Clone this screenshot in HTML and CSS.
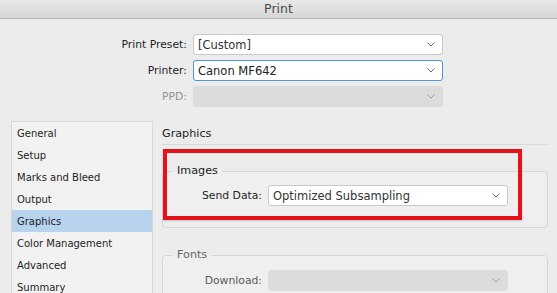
FILE: index.html
```html
<!DOCTYPE html>
<html lang="en">
<head>
    <meta charset="UTF-8">
    <title>Print</title>
    <link rel="stylesheet" href="styles.css">
</head>
<body>
    <div class="window">
        <div class="titlebar">Print</div>

        <div class="top-form">
            <label class="label">Print Preset:</label>
            <div class="select">
                <span>[Custom]</span>
                <svg class="chevron" viewBox="0 0 8 5"><polyline points="0.5,0.5 4,4 7.5,0.5"/></svg>
            </div>

            <label class="label">Printer:</label>
            <div class="select focused">
                <span>Canon MF642</span>
                <svg class="chevron" viewBox="0 0 8 5"><polyline points="0.5,0.5 4,4 7.5,0.5"/></svg>
            </div>

            <label class="label disabled">PPD:</label>
            <div class="select is-disabled">
                <span></span>
                <svg class="chevron" viewBox="0 0 8 5"><polyline points="0.5,0.5 4,4 7.5,0.5"/></svg>
            </div>
        </div>

        <div class="main">
            <ul class="sidebar">
                <li>General</li>
                <li>Setup</li>
                <li>Marks and Bleed</li>
                <li>Output</li>
                <li class="active">Graphics</li>
                <li>Color Management</li>
                <li>Advanced</li>
                <li>Summary</li>
            </ul>

            <div class="content">
                <h2 class="section-title">Graphics</h2>

                <fieldset class="group images">
                    <legend>Images</legend>
                    <div class="row">
                        <label class="label">Send Data:</label>
                        <div class="select">
                            <span>Optimized Subsampling</span>
                            <svg class="chevron" viewBox="0 0 8 5"><polyline points="0.5,0.5 4,4 7.5,0.5"/></svg>
                        </div>
                    </div>
                </fieldset>

                <fieldset class="group fonts">
                    <legend class="muted">Fonts</legend>
                    <div class="row">
                        <label class="label muted">Download:</label>
                        <div class="select is-disabled">
                            <span></span>
                            <svg class="chevron" viewBox="0 0 8 5"><polyline points="0.5,0.5 4,4 7.5,0.5"/></svg>
                        </div>
                    </div>
                    <div class="row">
                        <span></span>
                        <span class="checkbox"></span>
                    </div>
                </fieldset>

                <!-- highlight drawn over the Images group -->
                <div class="highlight"></div>
            </div>
        </div>
    </div>
</body>
</html>
```

FILE: styles.css
```css
* {
    margin: 0;
    padding: 0;
    box-sizing: border-box;
}

body {
    width: 557px;
    height: 293px;
    overflow: hidden;
    background: #ececec;
    font-family: "DejaVu Sans", sans-serif;
    color: #262626;
}

.window {
    height: 293px;
    overflow: hidden;
}

/* Title bar */
.titlebar {
    height: 19px;
    line-height: 18px;
    text-align: center;
    font-size: 12.5px;
    color: #4a4a4a;
    background: linear-gradient(#e8e8e8, #d6d6d6);
    border-bottom: 1px solid #b3b3b3;
}

/* Preset / printer form */
.top-form {
    display: grid;
    grid-template-columns: 187px 250px;
    grid-auto-rows: 21px;
    column-gap: 6px;
    row-gap: 5px;
    padding-top: 15px;
}

.label {
    font-size: 10.8px;
    line-height: 21px;
    text-align: right;
    color: #1f1f1f;
    white-space: nowrap;
}

.label.disabled {
    color: #959595;
}

.label.muted {
    color: #5c5c5c;
}

.select {
    display: flex;
    align-items: center;
    justify-content: space-between;
    height: 21px;
    padding: 0 7px 0 4px;
    background: #fff;
    border: 1px solid #c9c9c9;
    border-radius: 3px;
    font-size: 11.5px;
    color: #333;
}

.select.focused {
    border-color: #4f93d8;
    color: #222;
}

.select.is-disabled {
    background: #dcdcdc;
    border-color: #dcdcdc;
}

.chevron {
    width: 8px;
    height: 5px;
    fill: none;
    stroke: #6b6b6b;
    stroke-width: 1;
}

.is-disabled .chevron {
    stroke: #9d9d9d;
}

/* Main area */
.main {
    display: flex;
    gap: 9px;
    margin-top: 14px;
    padding-left: 11px;
}

.sidebar {
    list-style: none;
    width: 142px;
    height: 200px;
    background: #f2f2f2;
    border: 1px solid #d7d7d7;
    flex-shrink: 0;
}

.sidebar li {
    height: 22px;
    line-height: 23px;
    padding-left: 5px;
    font-size: 10px;
    color: #1e1e1e;
}

.sidebar li.active {
    background: #b8d3ee;
}

.content {
    position: relative;
    width: 386px;
}

.section-title {
    font-size: 11.2px;
    font-weight: normal;
    line-height: 16px;
    padding-top: 5px;
    padding-bottom: 2px;
    border-bottom: 1px solid #dadada;
    color: #222;
}

/* Group boxes */
.group {
    border: 1px solid #d6d6d6;
    border-radius: 4px;
    background: #efefef;
}

.group legend {
    font-size: 11.2px;
    line-height: 14px;
    margin-left: 10px;
    padding: 0 4px;
    color: #222;
}

.group legend.muted {
    color: #666;
}

.images {
    margin-top: 19px;
    padding: 7px 0 13px;
}

.fonts {
    margin-top: 20px;
    padding: 8px 0 10px;
}

.row {
    display: grid;
    grid-template-columns: 99px 240px;
    column-gap: 6px;
    margin-bottom: 8px;
}

.checkbox {
    display: block;
    width: 12px;
    height: 12px;
    margin-left: 2px;
    background: #e2e2e2;
    border: 1px solid #c4c4c4;
    border-radius: 2px;
}

/* Red highlight frame */
.highlight {
    position: absolute;
    left: 1px;
    top: 28px;
    width: 359px;
    height: 71px;
    border: 4px solid #e3121b;
    box-shadow: 0 1px 2px rgba(0, 0, 0, 0.2);
}
```
